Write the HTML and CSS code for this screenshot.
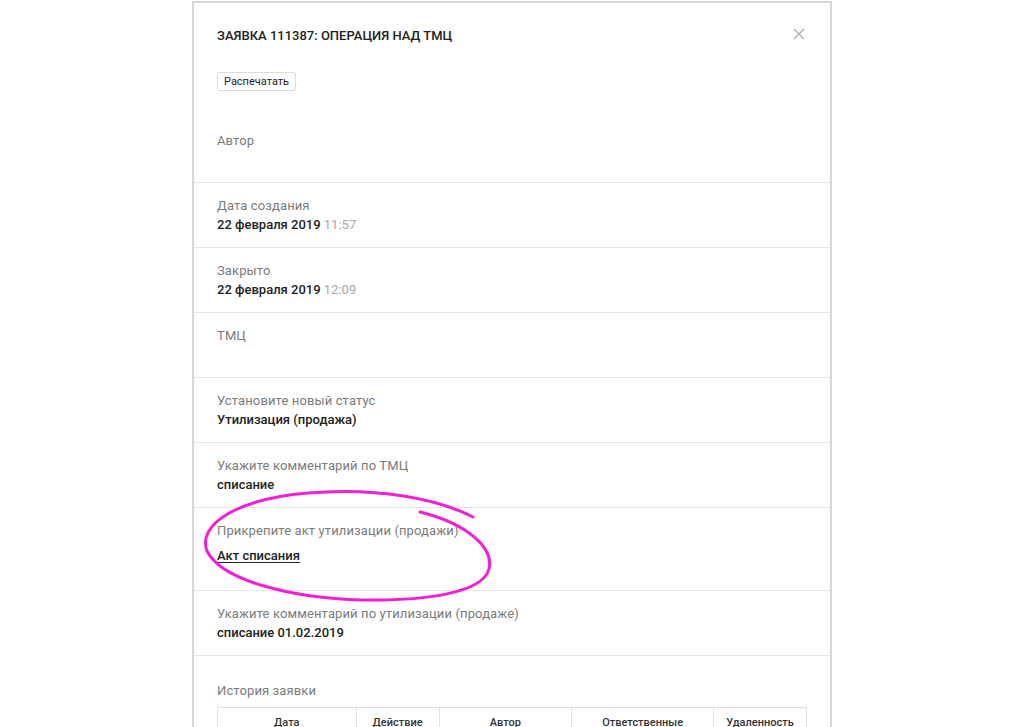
FILE: index.html
```html
<!DOCTYPE html>
<html lang="ru">
<head>
<meta charset="utf-8">
<title>Заявка 111387</title>
<link rel="stylesheet" href="styles.css">
</head>
<body>
<div class="modal">
  <svg class="close" viewBox="0 0 12 12" width="12" height="12"><path d="M1 1 L11 11 M11 1 L1 11" stroke="#a9a9a9" stroke-width="1.2" fill="none"/></svg>
  <div class="head">
    <div class="title">ЗАЯВКА 111387: ОПЕРАЦИЯ НАД ТМЦ</div>
    <button class="btn">Распечатать</button>
    <div class="label author">Автор</div>
    <div class="value"></div>
  </div>
  <div class="row">
    <div class="label">Дата создания</div>
    <div class="value">22 февраля 2019 <span class="time">11:57</span></div>
  </div>
  <div class="row">
    <div class="label">Закрыто</div>
    <div class="value">22 февраля 2019 <span class="time">12:09</span></div>
  </div>
  <div class="row">
    <div class="label">ТМЦ</div>
    <div class="value"></div>
  </div>
  <div class="row">
    <div class="label">Установите новый статус</div>
    <div class="value">Утилизация (продажа)</div>
  </div>
  <div class="row">
    <div class="label">Укажите комментарий по ТМЦ</div>
    <div class="value">списание</div>
  </div>
  <div class="row row-attach">
    <div class="label">Прикрепите акт утилизации (продажи)</div>
    <a class="link" href="#">Акт списания</a>
  </div>
  <div class="row">
    <div class="label">Укажите комментарий по утилизации (продаже)</div>
    <div class="value">списание 01.02.2019</div>
  </div>
  <div class="row row-history">
    <div class="label">История заявки</div>
    <table class="history">
      <thead>
        <tr>
          <th class="c1">Дата</th>
          <th class="c2">Действие</th>
          <th class="c3">Автор</th>
          <th class="c4">Ответственные</th>
          <th class="c5">Удаленность</th>
        </tr>
      </thead>
      <tbody>
        <tr><td></td><td></td><td></td><td></td><td></td></tr>
      </tbody>
    </table>
  </div>
  <svg class="scribble" width="1024" height="727" viewBox="0 0 1024 727">
    <path d="M420 512 C468 524 494 548 489 569 C483 593 425 601 362 600 C292 598 222 581 207 551 C197 525 236 499 308 493 C378 487 438 499 473 517" fill="none" stroke="#f41fd5" stroke-width="3" stroke-linecap="round"/>
  </svg>
</div>
</body>
</html>
```

FILE: styles.css
```css
* { box-sizing: border-box; }
html, body { margin: 0; padding: 0; background: #fff; }
body {
  font-family: Roboto, "Noto Sans", Arial, sans-serif;
  font-size: 13px;
  color: #222;
  height: 727px;
  overflow: hidden;
}
.modal {
  width: 640px;
  height: 728px;
  margin: 1px auto 0;
  border: 2px solid #d8d8d8;
  border-bottom: none;
  overflow: hidden;
  background: #fff;
}
.close {
  position: absolute;
  left: 793px;
  top: 28px;
}
.scribble {
  position: absolute;
  left: 0;
  top: 0;
  pointer-events: none;
}
.head {
  padding: 23px 23px 13px;
}
.title {
  font-size: 13px;
  font-weight: 500;
  line-height: 20px;
  color: #222;
}
.btn {
  display: block;
  margin-top: 26px;
  height: 19px;
  padding: 0 6px;
  font-family: inherit;
  font-size: 11px;
  color: #222;
  background: #fff;
  border: 1px solid #dcdcdc;
  border-radius: 2px;
  line-height: 17px;
}
.label {
  color: #7b7b7b;
  line-height: 19px;
  letter-spacing: 0.12px;
}
.author { margin-top: 40px; }
.value {
  font-weight: 500;
  line-height: 19px;
  min-height: 19px;
  color: #222;
}
.time {
  color: #a8a8a8;
  font-weight: 400;
}
.row {
  border-top: 1px solid #e6e6e6;
  padding: 13px 23px 13px;
}
.row-attach { padding-bottom: 25px; }
.link {
  display: block;
  margin-top: 6px;
  line-height: 19px;
  color: #222;
  font-weight: 500;
  text-decoration: underline;
  text-underline-offset: 2px;
}
.row-history { padding-top: 25px; }
.row-history .label { margin-bottom: 7px; }
.history {
  width: 590px;
  border-collapse: collapse;
  border: 1px solid #dedede;
  font-size: 11px;
}
.history th {
  font-weight: 500;
  color: #333;
  border-left: 1px solid #e2e2e2;
  padding: 7px 4px 4px;
  line-height: 15px;
  text-align: center;
}
.history td {
  height: 30px;
  border-left: 1px solid #e2e2e2;
  border-top: 1px solid #e2e2e2;
}
.c1 { width: 139px; }
.c2 { width: 83px; }
.c3 { width: 133px; }
.c4 { width: 142px; }
.c5 { width: 93px; }
```
